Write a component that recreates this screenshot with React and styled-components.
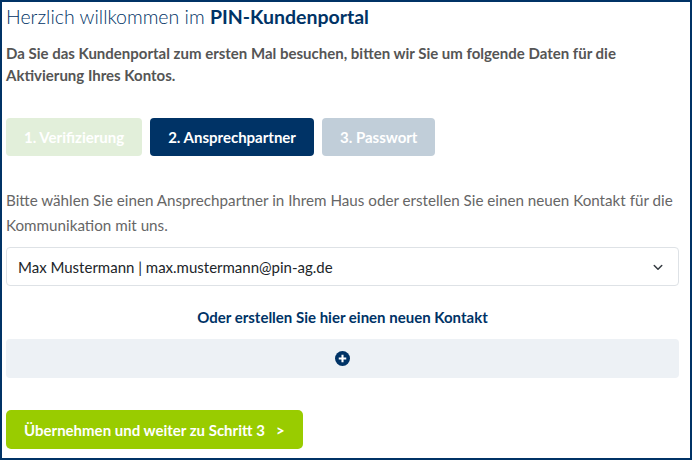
import React from "react";
import styled, { createGlobalStyle } from "styled-components";

const GlobalStyle = createGlobalStyle`
  html, body {
    margin: 0;
    padding: 0;
    background: #fff;
  }
  * {
    box-sizing: border-box;
  }
`;

const Frame = styled.div`
  width: 692px;
  height: 460px;
  border: 2px solid #003366;
  padding: 2px 11px 0 4px;
  font-family: "Lato", "Liberation Sans", sans-serif;
  overflow: hidden;
`;

const Title = styled.h1`
  margin: 0;
  font-size: 19.5px;
  font-weight: 300;
  line-height: 26px;
  color: #003366;
  strong {
    font-weight: 700;
  }
`;

const Intro = styled.p`
  margin: 12px 0 0;
  font-size: 15px;
  font-weight: 700;
  line-height: 22px;
  color: #555;
`;

const Steps = styled.div`
  display: flex;
  gap: 8px;
  margin-top: 32px;
`;

const Step = styled.div`
  height: 38px;
  padding: 0 18px;
  display: flex;
  align-items: center;
  border-radius: 4px;
  font-size: 15px;
  font-weight: 700;
  color: #fff;
  background: ${(p) =>
    p.$state === "active" ? "#003366" : p.$state === "done" ? "#e2efda" : "#c1ced9"};
`;

const Hint = styled.p`
  margin: 32px 0 0;
  font-size: 15.2px;
  line-height: 25px;
  color: #666;
`;

const Select = styled.div`
  margin-top: 9px;
  height: 39px;
  border: 1px solid #dee2e6;
  border-radius: 4px;
  padding: 0 14px 0 11px;
  display: flex;
  align-items: center;
  justify-content: space-between;
  font-size: 15px;
  color: #212529;
`;

const SubHeading = styled.div`
  margin-top: 22px;
  text-align: center;
  font-size: 15px;
  font-weight: 700;
  color: #003366;
`;

const AddBar = styled.div`
  margin-top: 13px;
  height: 39px;
  border-radius: 4px;
  background: #edf1f5;
  display: flex;
  align-items: center;
  justify-content: center;
`;

const NextButton = styled.button`
  margin-top: 32px;
  height: 39px;
  padding: 0 18px;
  border: none;
  border-radius: 5px;
  background: #99cc00;
  color: #fff;
  font-family: inherit;
  font-size: 15px;
  font-weight: 700;
  display: flex;
  align-items: center;
  gap: 11px;
`;

const Chevron = () => (
  <svg width="12" height="12" viewBox="0 0 16 16" fill="none">
    <path d="M3 6l5 5 5-5" stroke="#343a40" strokeWidth="2" strokeLinecap="round" strokeLinejoin="round" />
  </svg>
);

const PlusCircle = () => (
  <svg width="15" height="15" viewBox="0 0 16 16">
    <circle cx="8" cy="8" r="8" fill="#003366" />
    <path d="M8 4v8M4 8h8" stroke="#fff" strokeWidth="2.2" />
  </svg>
);

export default function App() {
  return (
    <>
      <GlobalStyle />
      <Frame>
        <Title>
          Herzlich willkommen im <strong>PIN-Kundenportal</strong>
        </Title>
        <Intro>
          Da Sie das Kundenportal zum ersten Mal besuchen, bitten wir Sie um folgende Daten für die
          Aktivierung Ihres Kontos.
        </Intro>
        <Steps>
          <Step $state="done">1. Verifizierung</Step>
          <Step $state="active">2. Ansprechpartner</Step>
          <Step $state="todo">3. Passwort</Step>
        </Steps>
        <Hint>
          Bitte wählen Sie einen Ansprechpartner in Ihrem Haus oder erstellen Sie einen neuen Kontakt
          für die Kommunikation mit uns.
        </Hint>
        <Select>
          <span>Max Mustermann | max.mustermann@pin-ag.de</span>
          <Chevron />
        </Select>
        <SubHeading>Oder erstellen Sie hier einen neuen Kontakt</SubHeading>
        <AddBar>
          <PlusCircle />
        </AddBar>
        <NextButton>
          <span>Übernehmen und weiter zu Schritt 3</span>
          <span>&gt;</span>
        </NextButton>
      </Frame>
    </>
  );
}
